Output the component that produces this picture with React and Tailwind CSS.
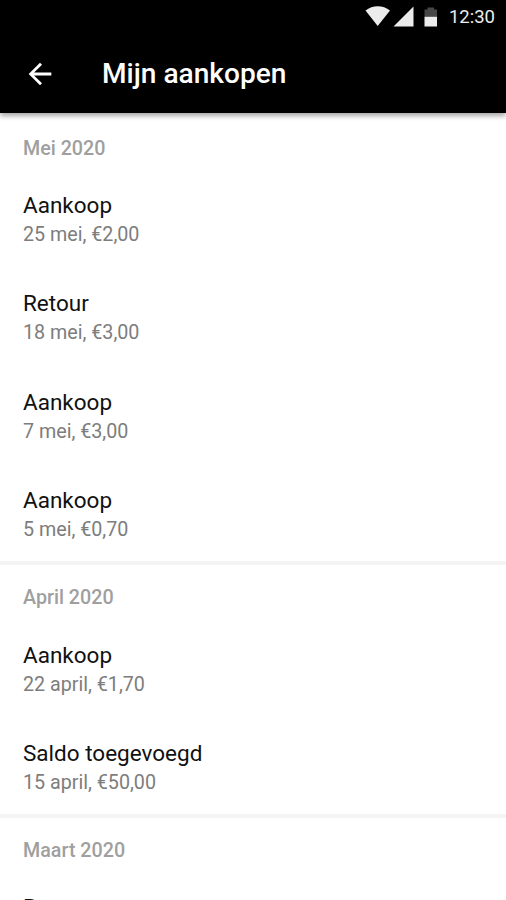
import React from 'react';

const months = [
  {
    label: 'Mei 2020',
    items: [
      { title: 'Aankoop', detail: '25 mei, €2,00' },
      { title: 'Retour', detail: '18 mei, €3,00' },
      { title: 'Aankoop', detail: '7 mei, €3,00' },
      { title: 'Aankoop', detail: '5 mei, €0,70' },
    ],
  },
  {
    label: 'April 2020',
    items: [
      { title: 'Aankoop', detail: '22 april, €1,70' },
      { title: 'Saldo toegevoegd', detail: '15 april, €50,00' },
    ],
  },
  {
    label: 'Maart 2020',
    items: [{ title: 'Retour' }],
  },
];

const StatusBar = () => (
  <div className="flex h-[34px] items-center justify-end pr-[11px]">
    <svg className="h-[34px] w-[75px]" viewBox="0 0 75 34" fill="#ececec">
      <path d="M0.500 10.500C7.500 4.800 18 4.800 25 10.500L12.700 26z" />
      <path d="M48.500 6.500v20H28.500z" />
      <path d="M59.500 9.500h3V7.500h6.500V9.500H72v7.500H59.500z" fillOpacity="0.3" />
      <path d="M59.500 16.800H72v9.700H59.500z" />
    </svg>
    <span className="ml-[9px] text-[18.500px] leading-[34px] text-[#ececec]">12:30</span>
  </div>
);

const Header = () => (
  <header className="relative z-10 h-[113px] shrink-0 bg-black shadow-[0_3px_5px_rgba(0,0,0,0.35)]">
    <StatusBar />
    <div className="flex h-[79px] items-center pl-[23px]">
      <svg className="h-[34px] w-[34px]" viewBox="0 0 24 24" fill="#fff">
        <path d="M20 11H7.830l5.590-5.590L12 4l-8 8 8 8 1.410-1.410L7.830 13H20v-2z" />
      </svg>
      <h1 className="ml-[45px] text-[28.100px] leading-[42px] font-medium text-white">Mijn aankopen</h1>
    </div>
  </header>
);

const Purchase = ({ title, detail }) => (
  <li className="h-[86.900px] pt-[11px]">
    <p className="text-[22.500px] leading-[30px] text-[#111]">{title}</p>
    {detail && <p className="text-[19.700px] leading-[30.600px] text-[#7d7d7d]">{detail}</p>}
  </li>
);

const Month = ({ label, items }) => (
  <section className="border-b-4 border-[#f4f4f4] px-[23px]">
    <h2 className="h-[63.480px] pt-[19px] text-[19.700px] leading-[28px] font-medium text-[#9f9f9f]">{label}</h2>
    <ul className="flex flex-col gap-[11.500px]">
      {items.map((item) => (
        <Purchase key={`${item.title} ${item.detail}`} {...item} />
      ))}
    </ul>
  </section>
);

const App = () => (
  <div className="flex h-[900px] w-[506px] flex-col overflow-hidden bg-white font-['Roboto',sans-serif]">
    <Header />
    <main className="pt-[2.600px]">
      {months.map((month) => (
        <Month key={month.label} {...month} />
      ))}
    </main>
  </div>
);

export default App;
